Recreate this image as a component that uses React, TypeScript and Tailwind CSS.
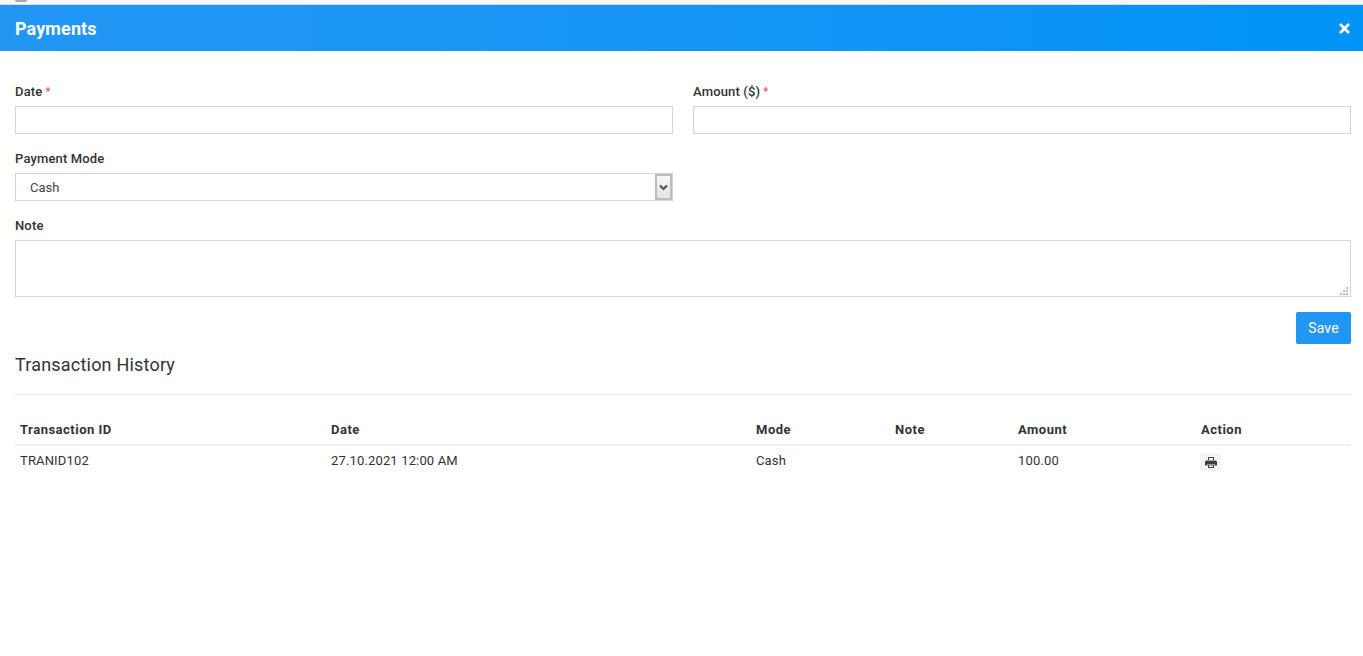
import { X } from "lucide-react";

const font = "font-['Roboto',sans-serif]";

function Label({ text, required }: { text: string; required?: boolean }) {
  return (
    <label className="mb-[5px] block h-[19px] text-[13px] font-medium leading-[19px] tracking-[0.15px] text-[#333]">
      {text}
      {required && <span className="ml-[3px] align-[1px] text-[11px] text-[#f0436e]">*</span>}
    </label>
  );
}

const inputCls = "block h-[28px] w-full border border-[#d3d3e0] bg-white outline-none";

const rows = [
  { id: "TRANID102", date: "27.10.2021 12:00 AM", mode: "Cash", note: "", amount: "100.00" },
];

export default function App() {
  return (
    <div className={`${font} h-[656px] w-[1363px] overflow-hidden bg-white text-[#333]`}>
      {/* page behind the modal */}
      <div className="relative h-[5px] border-b border-[#dcdcdc] bg-[#f8f8f8]">
        <div className="absolute left-[15px] top-0 h-[2px] w-[12px] rounded-b-full bg-[#a8a8a8]" />
      </div>

      {/* modal header */}
      <div className="flex h-[46px] items-center justify-between bg-gradient-to-r from-[#2196f3] to-[#0094f7] pl-[15px] pr-[11px]">
        <h4 className="text-[18px] font-bold tracking-[0.1px] text-white">Payments</h4>
        <X className="h-[15px] w-[15px] text-white" strokeWidth={4.5} />
      </div>

      <div className="pl-[15px] pr-[12px] pt-[31px]">
        <div className="grid grid-cols-2 gap-x-[20px]">
          <div>
            <Label text="Date" required />
            <input className={inputCls} />
          </div>
          <div>
            <Label text="Amount ($)" required />
            <input className={inputCls} />
          </div>
        </div>

        <div className="mt-[15px] grid grid-cols-2 gap-x-[20px]">
          <div>
            <Label text="Payment Mode" />
            <div className="flex h-[28px] items-center justify-between border border-[#d3d3e0] bg-white pl-[14px] text-[13px] text-[#444]">
              <span className="mt-[1px]">Cash</span>
              <span className="flex h-[26px] w-[17px] items-center justify-center border-2 border-[#bcbcbc] bg-gradient-to-b from-[#f6f6f6] to-[#e4e4e4]">
                <svg width="9" height="7" viewBox="0 0 9 7">
                  <path d="M1 1.5 L4.5 5 L8 1.5" fill="none" stroke="#555" strokeWidth="2.2" />
                </svg>
              </span>
            </div>
          </div>
        </div>

        <div className="mt-[15px]">
          <Label text="Note" />
          <div className="relative">
            <textarea className="block h-[57px] w-full resize-none border border-[#d3d3e0] bg-white outline-none" />
            {/* resize grip */}
            <svg className="absolute bottom-[2px] right-[3px]" width="8" height="8" viewBox="0 0 8 8" fill="#bdbdbd">
              <rect x="6" y="0" width="2" height="2" />
              <rect x="3" y="3" width="2" height="2" />
              <rect x="6" y="3" width="2" height="2" />
              <rect x="0" y="6" width="2" height="2" />
              <rect x="3" y="6" width="2" height="2" />
              <rect x="6" y="6" width="2" height="2" />
            </svg>
          </div>
        </div>

        <div className="mt-[15px] flex justify-end">
          <button className="h-[32px] w-[55px] rounded-[2px] bg-[#2196f3] text-[14px] tracking-[0.15px] text-white">Save</button>
        </div>

        <h5 className="mt-[10px] text-[18px] font-normal leading-[22px] tracking-[0.2px] text-[#333]">Transaction History</h5>
        <hr className="mt-[18px] border-0 border-t border-[#eeeeee]" />

        <table className="mt-[21px] w-full table-fixed border-collapse text-[13px] tracking-[0.15px] text-[#333]">
          <colgroup>
            <col className="w-[311px]" />
            <col className="w-[425px]" />
            <col className="w-[139px]" />
            <col className="w-[123px]" />
            <col className="w-[183px]" />
            <col />
          </colgroup>
          <thead>
            <tr className="text-left">
              {["Transaction ID", "Date", "Mode", "Note", "Amount", "Action"].map((h) => (
                <th key={h} className="h-[29px] border-b-2 border-[#f0f0f0] px-[5px] pb-[1px] pt-0 text-[13px] font-bold tracking-[0.5px]">
                  {h}
                </th>
              ))}
            </tr>
          </thead>
          <tbody>
            {rows.map((r) => (
              <tr key={r.id}>
                <td className="h-[30px] px-[5px]">{r.id}</td>
                <td className="px-[5px]">{r.date}</td>
                <td className="px-[5px]">{r.mode}</td>
                <td className="px-[5px]">{r.note}</td>
                <td className="px-[5px]">{r.amount}</td>
                <td className="px-[5px]">
                  <span className="ml-[-1px] mt-[2px] flex h-[18px] w-[21px] items-center justify-center rounded-[2px] bg-[#f4f4f4] pt-[1px]">
                    <svg width="12" height="11" viewBox="0 0 12 11" fill="#3a3f4a">
                      <path d="M3 0h6v3H8V1H4v2H3z" />
                      <path d="M1.5 3.5h9A1.5 1.5 0 0 1 12 5v3.5H9.5V7h-7v1.5H0V5a1.5 1.5 0 0 1 1.5-1.5z" />
                      <path d="M3 7.5h6V11H3zm1 1V10h4V8.5z" fillRule="evenodd" />
                    </svg>
                  </span>
                </td>
              </tr>
            ))}
          </tbody>
        </table>
      </div>
    </div>
  );
}
